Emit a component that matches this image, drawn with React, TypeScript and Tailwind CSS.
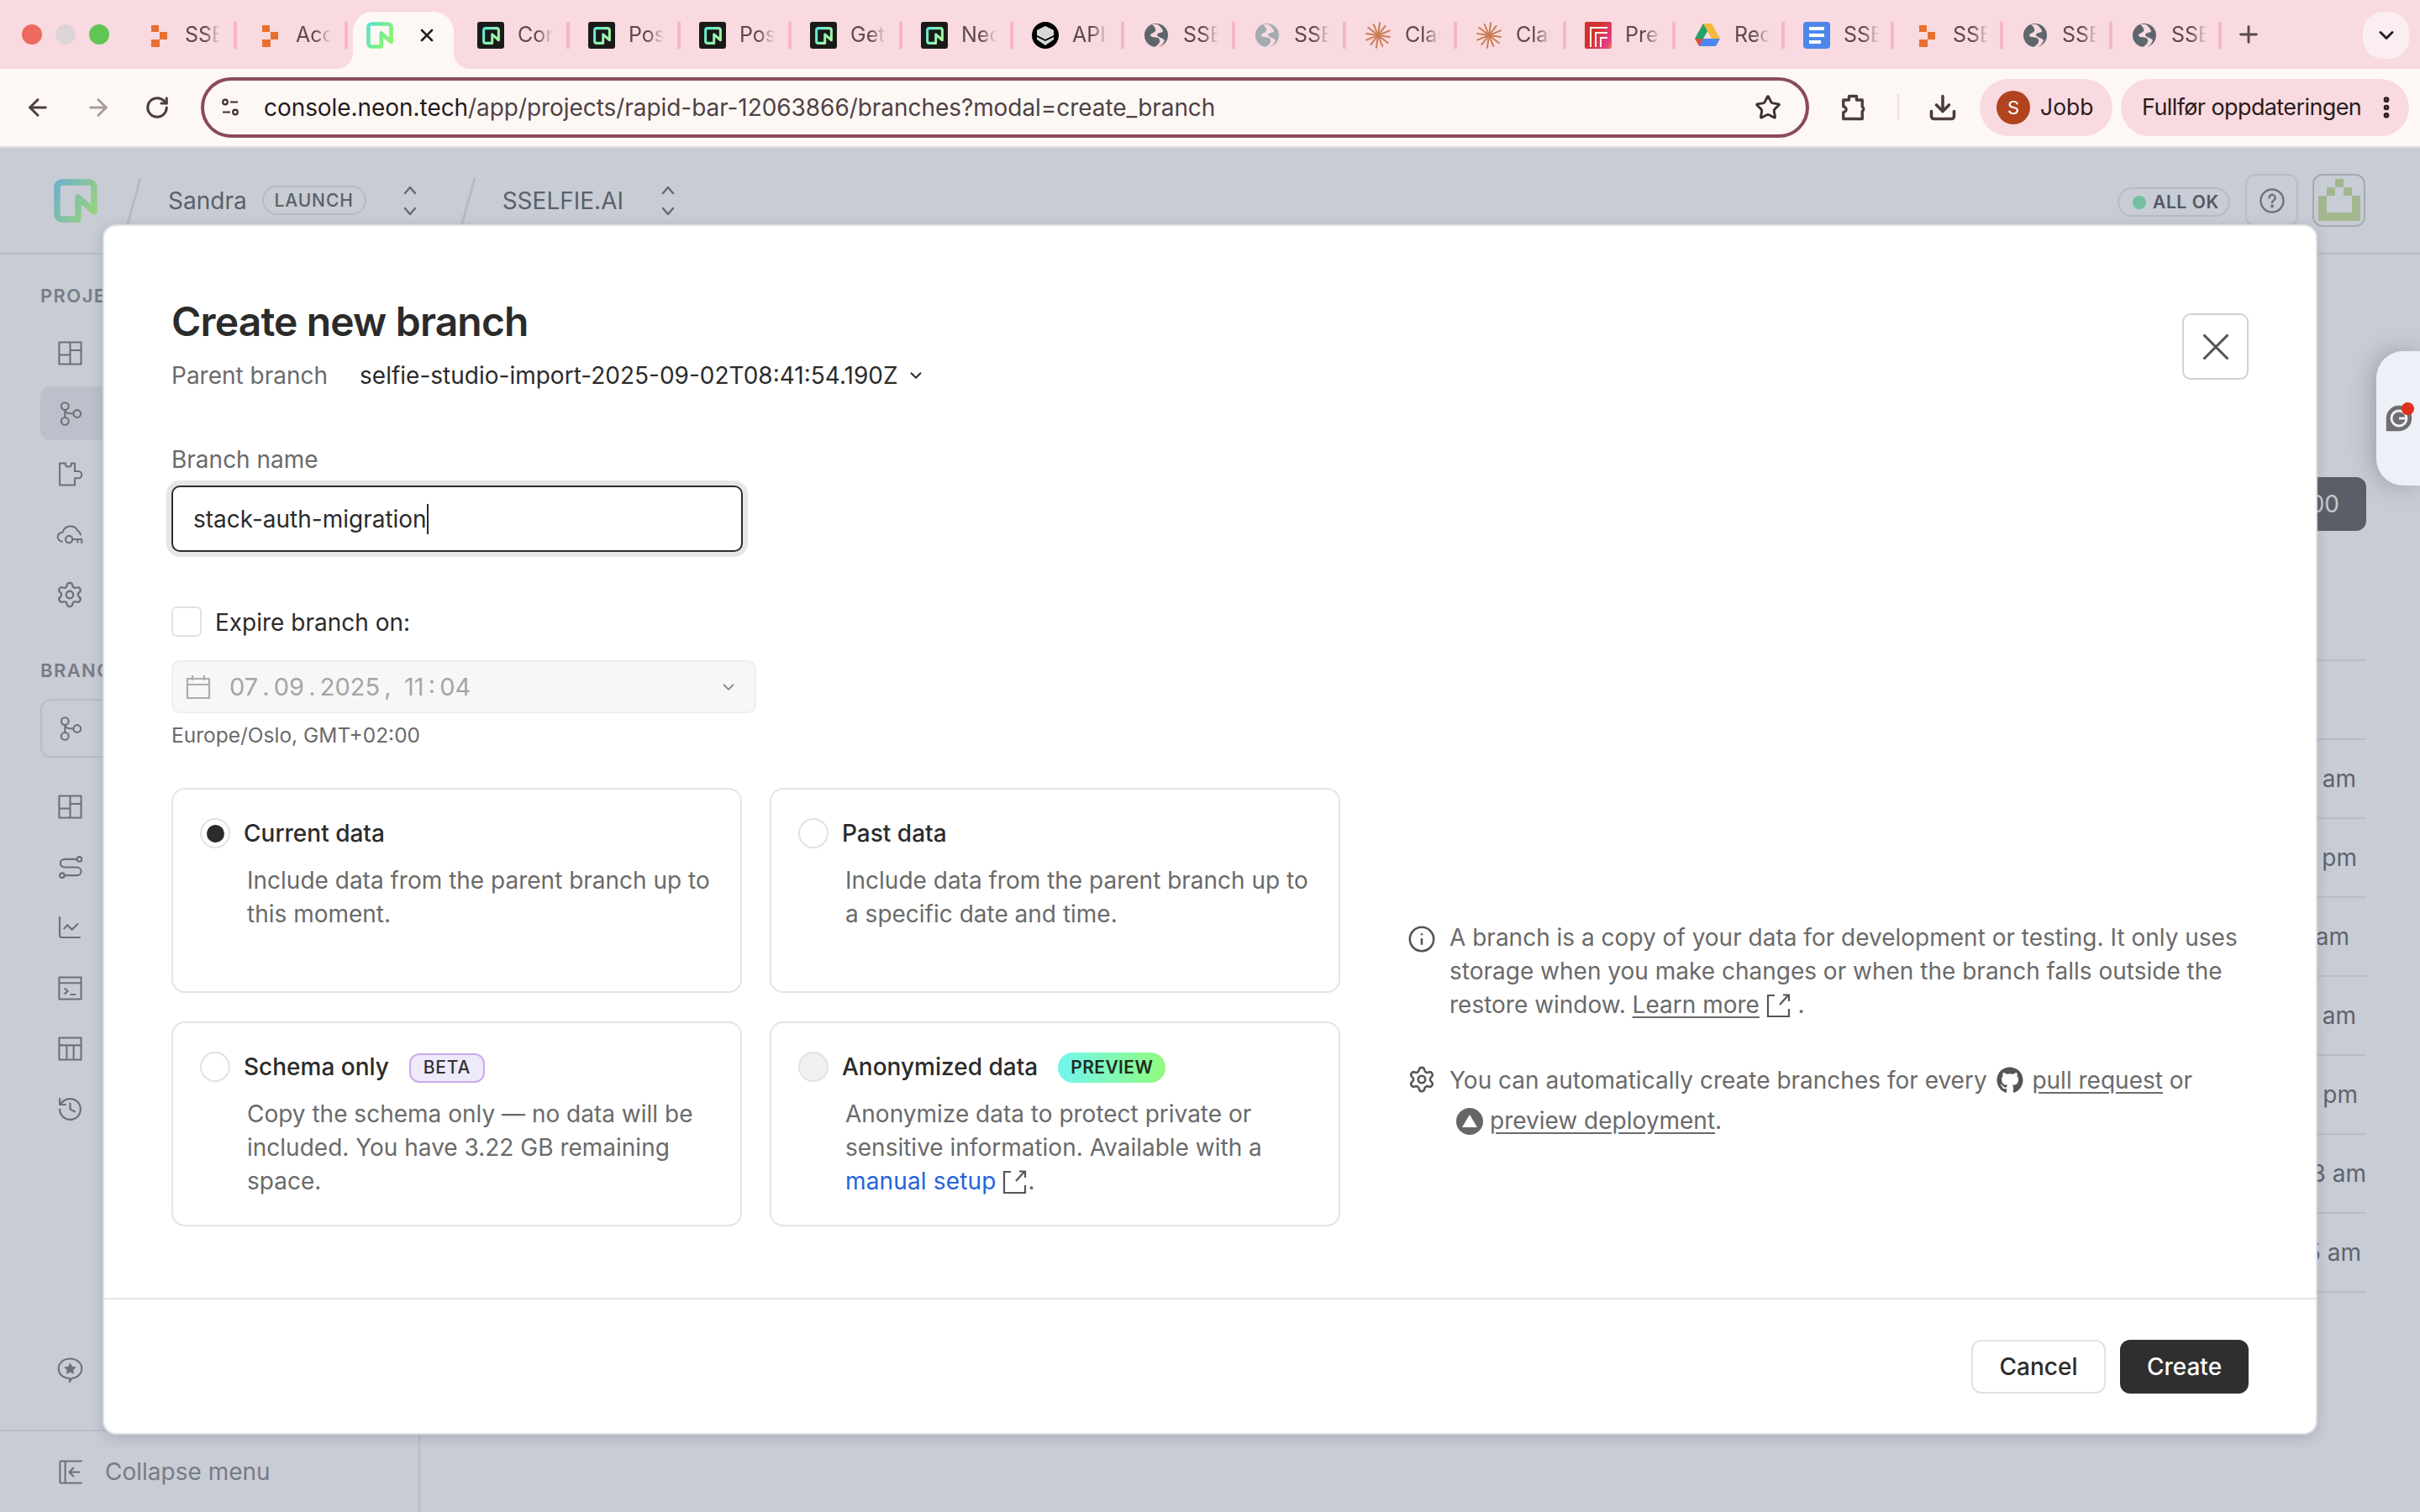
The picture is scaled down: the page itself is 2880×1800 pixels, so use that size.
import React from 'react';
import { ChartLine, History, Settings, Plus, ChevronDown, ArrowLeft, ArrowRight, RotateCw, Star, Download, EllipsisVertical, X, Info } from 'lucide-react';
import { FaGithub } from 'react-icons/fa';

const NeonMark: React.FC<{ id: string; from: string; to: string; className?: string }> = ({ id, from, to, className }) => (
  <svg viewBox="0 0 52 52" className={className} fill="none">
    <defs>
      <linearGradient id={id} x1="0" y1="0" x2="1" y2="0.6">
        <stop offset="0" stopColor={from} />
        <stop offset="1" stopColor={to} />
      </linearGradient>
    </defs>
    <path
      d="M29 48H10a6 6 0 0 1-6-6V10a6 6 0 0 1 6-6h32a6 6 0 0 1 6 6v29L29 22v24"
      stroke={`url(#${id})`}
      strokeWidth="7.5"
      strokeLinejoin="round"
      strokeLinecap="round"
    />
  </svg>
);

const NeonDark: React.FC<{ id: string }> = ({ id }) => (
  <div className="w-8 h-8 rounded-[3px] bg-[#1a1a1a] flex items-center justify-center">
    <NeonMark id={id} from="#5fe8d8" to="#a8f5a0" className="w-[21px] h-[21px]" />
  </div>
);

const OrangeIcon = () => (
  <svg viewBox="0 0 32 32" className="w-8 h-8" fill="#e8702f">
    <path d="M8 4h9v8H8zM18 12h9v9h-9zM8 21h10v9H8z" />
  </svg>
);

const GlobeIcon: React.FC<{ light?: boolean }> = ({ light }) => (
  <svg viewBox="0 0 32 32" className="w-8 h-8">
    <circle cx="16" cy="16" r="14" fill={light ? '#a3abb0' : '#5d666d'} />
    <path
      d="M11 3c3 3 5 5 4 8-1 2-5 2-6 5 1 3 6 2 9 3 3 2 3 5 0 8-2 2-3 3-5 3l6 0c4-2 6-5 7-8-2-3-7-3-9-6 0-3 4-3 7-4 0-3-3-7-7-9z"
      fill="#f9dae0"
    />
  </svg>
);

const ClaudeIcon = () => (
  <svg viewBox="0 0 32 32" className="w-8 h-8" stroke="#cb7d55" strokeWidth="2" strokeLinecap="round">
    {[0, 30, 60, 90, 120, 150, 180, 210, 240, 270, 300, 330].map((a, i) => (
      <line key={a} x1="16" y1="16" x2="16" y2={i % 2 ? 2 : 1} transform={`rotate(${a + 8} 16 16)`} />
    ))}
  </svg>
);

const PrefectIcon = () => (
  <div className="w-8 h-8 rounded-[2px] bg-[linear-gradient(120deg,#d2322c_40%,#e2408a_85%,#e78a30_100%)] overflow-hidden">
    <svg viewBox="0 0 32 32" className="w-8 h-8" fill="none" stroke="#fff" strokeWidth="2">
      <path d="M7 30V7h20M13 30V13h14M19 30V19h8" />
    </svg>
  </div>
);

const DriveIcon = () => (
  <svg viewBox="0 0 32 32" className="w-8 h-8">
    <path d="M11 2h10l-10 18H1z" fill="#21a366" />
    <path d="M11 2h10l10 18H21z" fill="#f6b93b" />
    <path d="M7 20h24l-5 9H6z" fill="#4d86ee" />
    <path d="M1 20h10l-5 9z" fill="#d8503f" />
  </svg>
);

const DocsIcon = () => (
  <div className="w-8 h-8 rounded-[4px] bg-[#4f86ec] flex flex-col justify-center gap-[4px] px-[7px]">
    <div className="h-[4px] bg-white w-full" />
    <div className="h-[4px] bg-white w-full" />
    <div className="h-[4px] bg-white w-[14px]" />
  </div>
);

const ApiIcon = () => (
  <svg viewBox="0 0 32 32" className="w-8 h-8">
    <circle cx="16" cy="16" r="16" fill="#000" />
    <path d="M16 5l10 5v6l-10 5-10-5v-6z" fill="#d7d9d8" />
    <path d="M6 18l10 5 10-5v3l-10 7-10-7z" fill="#d7d9d8" />
  </svg>
);

const tabs: { icon: React.ReactNode; label: string; active?: boolean; narrow?: boolean }[] = [
  { icon: <OrangeIcon />, label: 'SSELFIE' },
  { icon: <OrangeIcon />, label: 'Account' },
  { icon: <NeonMark id="fav-active" from="#5de0d0" to="#85f56f" className="w-8 h-8" />, label: '', active: true },
  { icon: <NeonDark id="fav-1" />, label: 'Console' },
  { icon: <NeonDark id="fav-2" />, label: 'Postgres' },
  { icon: <NeonDark id="fav-3" />, label: 'Postgres' },
  { icon: <NeonDark id="fav-4" />, label: 'Get started' },
  { icon: <NeonDark id="fav-5" />, label: 'Neon' },
  { icon: <ApiIcon />, label: 'API keys' },
  { icon: <GlobeIcon />, label: 'SSELFIE' },
  { icon: <GlobeIcon light />, label: 'SSELFIE' },
  { icon: <ClaudeIcon />, label: 'Claude' },
  { icon: <ClaudeIcon />, label: 'Claude', narrow: true },
  { icon: <PrefectIcon />, label: 'Preview', narrow: true },
  { icon: <DriveIcon />, label: 'Recent', narrow: true },
  { icon: <DocsIcon />, label: 'SSELFIE', narrow: true },
  { icon: <OrangeIcon />, label: 'SSELFIE', narrow: true },
  { icon: <GlobeIcon />, label: 'SSELFIE', narrow: true },
  { icon: <GlobeIcon />, label: 'SSELFIE', narrow: true },
];

const TabStrip = () => (
  <div className="h-[82px] bg-[#f9dae0] flex items-start shrink-0">
    <div className="w-[150px] h-full flex items-center pl-[26px] gap-[16px] shrink-0">
      <div className="w-6 h-6 rounded-full bg-[#ed6a5e]" />
      <div className="w-6 h-6 rounded-full bg-[#ddd4d7]" />
      <div className="w-6 h-6 rounded-full bg-[#61c554]" />
    </div>
    {tabs.map((t, i) =>
      t.active ? (
        <div key={i} className="w-[132px] h-full pt-[14px] px-[6px] shrink-0">
          <div className="relative h-full bg-[#fef8f5] rounded-t-[24px] flex items-start pt-[12px] pl-[16px]">
            <div className="absolute bottom-0 -left-5 w-5 h-5 bg-[radial-gradient(circle_at_0_0,transparent_20px,#fef8f5_20.5px)]" />
            <div className="absolute bottom-0 -right-5 w-5 h-5 bg-[radial-gradient(circle_at_100%_0,transparent_20px,#fef8f5_20.5px)]" />
            {t.icon}
            <X size={24} strokeWidth={2.6} className="ml-[28px] mt-[4px] text-[#1f1f1f]" />
          </div>
        </div>
      ) : (
        <div key={i} className={`${t.narrow ? 'w-[130px]' : 'w-[132px]'} h-full pt-[26px] shrink-0`}>
          <div className="h-8 flex items-center pl-[22px] border-r-[4px] border-[#f5b6c2]">
            {t.icon}
            <span className="ml-[16px] w-[42px] overflow-hidden whitespace-nowrap text-[25px] text-[#5b494e] [mask-image:linear-gradient(to_right,black_55%,transparent)]">
              {t.label}
            </span>
          </div>
        </div>
      ),
    )}
    <Plus size={32} strokeWidth={2.2} className="ml-[16px] mt-[25px] text-[#5b494e] shrink-0" />
    <div className="ml-auto mr-[13px] mt-[14px] w-[55px] h-[56px] rounded-[24px] bg-[#fbeef0] flex items-center justify-center">
      <ChevronDown size={28} strokeWidth={2.6} className="text-[#2b2024]" />
    </div>
  </div>
);

const SiteIcon = () => (
  <svg viewBox="0 0 24 24" className="w-6 h-6" fill="none" stroke="#3e2f33" strokeWidth="2.2">
    <circle cx="6" cy="5.5" r="2.8" />
    <path d="M12 5.5h9M3 17.5h9" />
    <circle cx="18" cy="17.5" r="2.8" />
  </svg>
);

const ExtensionIcon = () => (
  <svg viewBox="0 0 32 32" className="w-9 h-9" fill="none" stroke="#4c3c41" strokeWidth="3" strokeLinejoin="round">
    <path d="M6 8h6V4h8v4h6v7a3 3 0 0 1 0 5v8H6v-7a3 3 0 0 0 0-6z" />
  </svg>
);

const Toolbar = () => (
  <div className="h-[94px] bg-[#fef8f5] border-b-2 border-[#e9d9da] flex items-center shrink-0 pl-[29px] pr-[13px]">
    <ArrowLeft size={32} strokeWidth={2.2} className="text-[#4c3c41] shrink-0" />
    <ArrowRight size={32} strokeWidth={2.2} className="ml-[40px] text-[#a89ea0] shrink-0" />
    <RotateCw size={30} strokeWidth={2.4} className="ml-[39px] text-[#4c3c41] shrink-0" />
    <div className="ml-[37px] w-[1914px] h-[72px] rounded-full border-[4px] border-[#8a4b5a] flex items-center pl-[19px] pr-[29px] shrink-0">
      <SiteIcon />
      <span className="ml-[28px] text-[28px] text-[#241a1d] tracking-[-0.06px] whitespace-nowrap">
        console.neon.tech<span className="text-[#4e4246]">/app/projects/rapid-bar-12063866/branches?modal=create_branch</span>
      </span>
      <Star size={32} strokeWidth={2.2} className="ml-auto text-[#3e2f33]" />
    </div>
    <div className="ml-[34px] shrink-0">
      <ExtensionIcon />
    </div>
    <div className="ml-[35px] w-[2px] h-[32px] bg-[#f1dedf] shrink-0" />
    <Download size={36} strokeWidth={2.4} className="ml-[34px] text-[#4c3c41] shrink-0" />
    <div className="ml-[26px] w-[158px] h-[68px] rounded-full bg-[#f9dae0] flex items-center pl-[20px] shrink-0">
      <div className="w-10 h-10 rounded-full bg-[#b1441f] flex items-center justify-center text-[22px] text-white">S</div>
      <span className="ml-[12px] text-[26.5px] text-[#2a1c20]">Jobb</span>
    </div>
    <div className="ml-[10px] w-[343px] h-[68px] rounded-full bg-[#f9dae0] flex items-center pl-[25px] shrink-0">
      <span className="text-[27px] text-[#2a1c20] whitespace-nowrap tracking-[-0.6px]">Fullfør oppdateringen</span>
      <EllipsisVertical size={32} strokeWidth={3} className="ml-auto mr-[11px] text-[#2a1c20]" />
    </div>
  </div>
);

const UpDown = ({ className = '' }: { className?: string }) => (
  <svg viewBox="0 0 20 38" className={`w-5 h-[38px] ${className}`} fill="none" stroke="#656a73" strokeWidth="2.4" strokeLinecap="round" strokeLinejoin="round">
    <path d="M4 10l6-7 6 7M4 28l6 7 6-7" />
  </svg>
);

const Slash = ({ className = '' }: { className?: string }) => (
  <svg viewBox="0 0 20 58" className={`w-5 h-[58px] self-start mt-[36px] ${className}`} fill="none" stroke="#b6bac5" strokeWidth="3">
    <path d="M19 0L3 58" />
  </svg>
);

const PixelAvatar = () => (
  <svg viewBox="0 0 50 50" className="w-[50px] h-[50px]" fill="#a3b78f">
    <path d="M20 0h10v10h10v10h10v30H0V20h10V10h10zM20 10v10H10v20h30V20H30V10z" fillRule="evenodd" />
  </svg>
);

const PageHeader = () => (
  <div className="h-[127px] border-b-2 border-[#b9bdc8] flex items-center shrink-0 pl-[64px] pr-[65px]">
    <NeonMark id="page-logo" from="#6fb1cb" to="#92d084" className="w-[52px] h-[52px]" />
    <Slash className="ml-[32px]" />
    <span className="ml-[32px] text-[28px] text-[#5b6069]">Sandra</span>
    <span className="ml-[18px] w-[124px] h-[35px] rounded-full border-2 border-[#b6bac5] flex items-center justify-center text-[21px] font-medium tracking-[0.9px] text-[#5b6069]">
      LAUNCH
    </span>
    <UpDown className="ml-[42px]" />
    <Slash className="ml-[48px]" />
    <span className="ml-[32px] text-[28px] text-[#5b6069]">SSELFIE.AI</span>
    <UpDown className="ml-[43px]" />
    <div className="ml-auto flex items-start self-start pt-[31px]">
      <div className="mt-[16px] w-[134px] h-[35px] rounded-full border-2 border-[#b6bac5] flex items-center pl-[16px] gap-[8px]">
        <span className="w-4 h-4 rounded-full bg-[#72bfa2]" />
        <span className="text-[21px] font-semibold tracking-[0.6px] text-[#545963]">ALL OK</span>
      </div>
      <div className="ml-[18px] w-[63px] h-[63px] rounded-[12px] border-2 border-[#b9bdc8] flex items-center justify-center">
        <svg viewBox="0 0 32 32" className="w-[32px] h-[32px]" fill="none" stroke="#6e737c" strokeWidth="2.4">
          <circle cx="16" cy="16" r="13.5" />
          <path d="M12.5 12.5a3.6 3.6 0 1 1 5.5 3c-1.3.8-2 1.5-2 2.8" strokeLinecap="round" />
          <circle cx="16" cy="22.5" r="0.8" fill="#6e737c" />
        </svg>
      </div>
      <div className="ml-[17px] w-[63px] h-[63px] rounded-[12px] border-2 border-[#a5a9b4] flex items-end justify-center pb-[5px]">
        <PixelAvatar />
      </div>
    </div>
  </div>
);

const stroke = { fill: 'none', stroke: 'currentColor', strokeWidth: 1.5, strokeLinecap: 'round', strokeLinejoin: 'round' } as const;
const navIcon = 'w-[33px] h-[33px]';

const DashIcon = () => (
  <svg viewBox="0 0 24 24" className={navIcon} {...stroke} strokeLinecap="butt">
    <path d="M2.5 2.5h19v19h-19zM12 2.5v19M2.5 13.5H12M12 9.5h9.5" />
  </svg>
);
const BranchIcon = () => (
  <svg viewBox="0 0 24 24" className={navIcon} {...stroke}>
    <circle cx="7.5" cy="5.5" r="3.2" />
    <circle cx="7.5" cy="18.5" r="3.2" />
    <circle cx="18" cy="12" r="3.2" />
    <path d="M7.5 8.7c0 2.5 2 3.3 7.3 3.3M7.5 15.3V8.7" />
  </svg>
);
const PuzzleIcon = () => (
  <svg viewBox="0 0 24 24" className={navIcon} {...stroke}>
    <path d="M3 2.5h5V4c0 2 5 2 5 0V2.5h3v7h3a2.5 2.5 0 0 1 0 6h-3v6H3z" />
  </svg>
);
const CloudKeyIcon = () => (
  <svg viewBox="0 0 24 24" className={navIcon} {...stroke}>
    <path d="M5 18a4 4 0 0 1 .5-8 7 7 0 0 1 13-1.5 5 5 0 0 1 2.5 3.5" />
    <circle cx="11" cy="16" r="3" />
    <path d="M14 16h8v3M18.5 16v2.5" />
  </svg>
);
const RouteIcon = () => (
  <svg viewBox="0 0 24 24" className={navIcon} {...stroke}>
    <circle cx="20" cy="5" r="2" />
    <circle cx="5" cy="19" r="2" />
    <path d="M18 5H7a3.5 3.5 0 0 0 0 7h11a3.5 3.5 0 0 1 0 7H7" />
  </svg>
);
const SqlIcon = () => (
  <svg viewBox="0 0 24 24" className={navIcon} {...stroke} strokeLinecap="butt">
    <path d="M2.5 2.5h19v19h-19zM2.5 7.5h19M7 12l3 2.5L7 17M12 17.5h5" />
  </svg>
);
const TablesIcon = () => (
  <svg viewBox="0 0 24 24" className={navIcon} {...stroke} strokeLinecap="butt">
    <path d="M2.5 2.5h19v19h-19zM2.5 9h19M9 9v12.5M15 9v12.5" />
  </svg>
);
const FeedbackIcon = () => (
  <svg viewBox="0 0 24 24" className={navIcon} {...stroke}>
    <path d="M12 2.5c5.500 0 10 3.500 10 8.500s-4.500 8.500-8.500 8.500l-2 3v-3C6 19.500 2 16 2 11s4.500-8.500 10-8.500z" />
    <path d="M12 6l1.700 3.300 3.600.5-2.600 2.500.6 3.600-3.300-1.700-3.300 1.700.6-3.600-2.600-2.500 3.600-.5z" fill="currentColor" stroke="none" />
  </svg>
);
const CollapseIcon = () => (
  <svg viewBox="0 0 24 24" className={navIcon} {...stroke} strokeLinecap="butt">
    <path d="M2.5 2.5h19M2.5 21.5h19M2.5 2.5v19M7 2.5v19M20 12h-9M14.5 8l-4 4 4 4" />
  </svg>
);

const SideIcon: React.FC<{ children: React.ReactNode; active?: boolean }> = ({ children, active }) => (
  <div className={`h-[64px] flex items-center pl-[19px] rounded-l-[12px] ${active ? 'bg-[#bcc0cb]' : ''}`}>{children}</div>
);

const Sidebar = () => (
  <div className="w-[500px] border-r-2 border-[#b9bdc8] flex flex-col text-[#6b7079] shrink-0">
    <div className="flex-1 pl-[48px] pt-[36px]">
      <div className="text-[22px] font-semibold tracking-[1.4px] text-[#777c85] leading-[26px]">PROJECT</div>
      <div className="mt-[23px] flex flex-col gap-[8px]">
        <SideIcon><DashIcon /></SideIcon>
        <SideIcon active><BranchIcon /></SideIcon>
        <SideIcon><PuzzleIcon /></SideIcon>
        <SideIcon><CloudKeyIcon /></SideIcon>
        <SideIcon><Settings size={34} strokeWidth={1.6} className="-ml-[1px]" /></SideIcon>
      </div>
      <div className="mt-[45px] text-[22px] font-semibold tracking-[1.4px] text-[#777c85] leading-[26px]">BRANCH</div>
      <div className="mt-[21px] h-[70px] border-2 border-[#b9bdc8] rounded-[12px] flex items-center pl-[17px]"><BranchIcon /></div>
      <div className="mt-[26px] flex flex-col gap-[8px]">
        <SideIcon><DashIcon /></SideIcon>
        <SideIcon><RouteIcon /></SideIcon>
        <SideIcon><ChartLine size={32} strokeWidth={1.6} /></SideIcon>
        <SideIcon><SqlIcon /></SideIcon>
        <SideIcon><TablesIcon /></SideIcon>
        <SideIcon><History size={33} strokeWidth={1.6} /></SideIcon>
      </div>
      <div className="mt-[246px]">
        <SideIcon><FeedbackIcon /></SideIcon>
      </div>
    </div>
    <div className="h-[98px] border-t-2 border-[#b9bdc8] flex items-center pl-[68px] shrink-0">
      <CollapseIcon />
      <span className="ml-[24px] text-[28px] text-[#777c85]">Collapse menu</span>
    </div>
  </div>
);

const timeRows = [
  { text: '', pr: 'pr-[12px]' },
  { text: 'am', pr: 'pr-[12px]' },
  { text: 'pm', pr: 'pr-[11px]' },
  { text: 'am', pr: 'pr-[20px]' },
  { text: 'am', pr: 'pr-[12px]' },
  { text: 'pm', pr: 'pr-[10px]' },
  { text: '3 am', pr: 'pr-0' },
  { text: '5 am', pr: 'pr-[6px]' },
];

const MainArea = () => (
  <div className="flex-1 flex flex-col items-end pr-[64px] pt-[265px]">
    <div className="w-[200px] h-[64px] bg-[#5a5e67] rounded-[12px] flex items-center justify-end pr-[32px] text-[28px] text-[#c4c8d0]">00</div>
    <div className="mt-[153px] w-[400px] border-t-2 border-[#b9bdc8]">
      {timeRows.map((r, i) => (
        <div key={i} className={`h-[94px] border-b-2 border-[#b9bdc8] flex items-center justify-end text-[28px] text-[#5e636c] ${r.pr}`}>
          {r.text}
        </div>
      ))}
    </div>
  </div>
);

const ExternalIcon = ({ className = '' }: { className?: string }) => (
  <svg viewBox="0 0 30 30" className={`inline-block w-[30px] h-[30px] align-[-6px] ${className}`} fill="none" stroke="currentColor" strokeWidth="2.2">
    <path d="M10 3H2v25h25v-9M16 14L26 3M20 2.5h7V10" />
  </svg>
);

const Radio: React.FC<{ checked?: boolean; disabled?: boolean }> = ({ checked, disabled }) => (
  <span className={`w-9 h-9 rounded-full border-2 border-[#e2e2e2] flex items-center justify-center shrink-0 ${disabled ? 'bg-[#f0f0f0]' : 'bg-white'}`}>
    {checked && <span className="w-[21px] h-[21px] rounded-full bg-[#2b2b2b]" />}
  </span>
);

const OptionCard: React.FC<{ title: string; checked?: boolean; disabled?: boolean; badge?: React.ReactNode; children: React.ReactNode }> = ({
  title,
  checked,
  disabled,
  badge,
  children,
}) => (
  <div className="h-[244px] rounded-[16px] border-2 border-[#e4e4e4] pl-[32px] pr-[28px] pt-[34px]">
    <div className="flex items-center h-9">
      <Radio checked={checked} disabled={disabled} />
      <span className="ml-[16px] text-[28px] font-medium text-[#2b2b2b]">{title}</span>
      {badge}
    </div>
    <p className="mt-[18px] ml-[56px] text-[28px] leading-[40px] text-[#6a6a6a]">{children}</p>
  </div>
);

const CreateBranchModal = () => (
  <div className="absolute left-[122px] top-[267px] w-[2636px] h-[1441px] bg-white rounded-[16px] border-2 border-[#dcdee2] shadow-[0_4px_16px_rgba(90,95,110,0.25)] flex flex-col">
    <div className="flex-1 pl-[80px] pr-[80px] pt-[86px]">
      <div className="flex items-start justify-between h-[174px]">
        <div>
          <h2 className="text-[48px] leading-[56px] font-semibold text-[#2b2b2b] tracking-[-0.85px]">Create new branch</h2>
          <div className="mt-[18px] flex items-center text-[28px] leading-[36px]">
            <span className="text-[#6a6a6a]">Parent branch</span>
            <span className="ml-[38px] text-[#2b2b2b]">selfie-studio-import-2025-09-02T08:41:54.190Z</span>
            <ChevronDown size={22} strokeWidth={2.2} className="ml-[10px] text-[#2b2b2b]" />
          </div>
        </div>
        <div className="mt-[18px] w-[79px] h-[79px] rounded-[10px] border-2 border-[#d2d2d2] flex items-center justify-center">
          <X size={54} strokeWidth={1.4} className="text-[#555]" />
        </div>
      </div>

      <div className="w-[680px] text-[28px] leading-[36px] text-[#6a6a6a]">Branch name</div>
      <div className="mt-[13px] w-[680px] h-[79px] rounded-[10px] border-2 border-[#2b2b2b] shadow-[0_0_0_6px_#e6e6e6] flex items-center pl-[24px] text-[28px] text-[#2b2b2b]">
        stack-auth-migration
        <span className="w-[2px] h-[36px] bg-[#2b2b2b]" />
      </div>

      <div className="mt-[65px] flex items-center h-9">
        <span className="w-9 h-9 rounded-[6px] border-2 border-[#e2e2e2]" />
        <span className="ml-[16px] mt-[2px] text-[28px] text-[#2b2b2b]">Expire branch on:</span>
      </div>
      <div className="mt-[28px] w-[696px] h-[63px] rounded-[10px] border-2 border-[#eeeeee] bg-[#f7f7f7] flex items-center pl-[14px] pr-[20px] text-[#a5a5a5]">
        <svg viewBox="0 0 32 32" className="w-8 h-8" fill="none" stroke="#adadad" strokeWidth="2.2">
          <path d="M3 6h26v23H3zM3 13h26M9 2v6M23 2v6" />
        </svg>
        <span className="ml-[21px] text-[29px] whitespace-pre [word-spacing:-3px]">07 . 09 . 2025 ,   11 : 04</span>
        <ChevronDown size={22} strokeWidth={2} className="ml-auto text-[#8c8c8c]" />
      </div>
      <div className="mt-[11px] text-[24.5px] leading-[30px] text-[#6a6a6a]">Europe/Oslo, GMT+02:00</div>

      <div className="mt-[48px] flex gap-[82px]">
        <div className="w-[1391px] grid grid-cols-2 gap-x-[33px] gap-y-[34px] shrink-0">
          <OptionCard title="Current data" checked>
            Include data from the parent branch up to this moment.
          </OptionCard>
          <OptionCard title="Past data">Include data from the parent branch up to a specific date and time.</OptionCard>
          <OptionCard
            title="Schema only"
            badge={
              <span className="ml-[24px] mt-[2px] w-[90px] h-[35px] rounded-[12px] border-2 border-[#c9a9f3] bg-[#efe9fc] flex items-center justify-center text-[21px] font-medium tracking-[0.8px] text-[#333]">
                BETA
              </span>
            }
          >
            Copy the schema only — no data will be included. You have 3.22 GB remaining space.
          </OptionCard>
          <OptionCard
            title="Anonymized data"
            disabled
            badge={
              <span className="ml-[24px] mt-[2px] w-[128px] h-[36px] rounded-full bg-[linear-gradient(90deg,#72f6ee,#90fb7d)] flex items-center justify-center text-[21px] font-semibold tracking-[0.4px] text-[#1f2a22]">
                PREVIEW
              </span>
            }
          >
            Anonymize data to protect private or sensitive information. Available with a{' '}
            <span className="text-[#2563dc] tracking-[0.15px]">manual setup</span> <ExternalIcon className="text-[#555]" />.
          </OptionCard>
        </div>

        <div className="pt-[158px] w-[990px] text-[28px] leading-[40px] text-[#6a6a6a]">
          <div className="flex">
            <Info size={34} strokeWidth={1.8} className="mt-[5px] -mx-[2px] shrink-0 text-[#555]" />
            <p className="ml-[18px]">
              A branch is a copy of your data for development or testing. It only uses storage when you make changes or when the
              branch falls outside the restore window. <span className="underline underline-offset-4">Learn more</span>{' '}
              <ExternalIcon className="text-[#555]" /> .
            </p>
          </div>
          <div className="mt-[46px] flex">
            <Settings size={34} strokeWidth={1.8} className="mt-[6px] -mx-[2px] shrink-0 text-[#555]" />
            <p className="ml-[18px] leading-[48px]">
              You can automatically create branches for every{' '}
              <FaGithub className="inline-block w-[32px] h-[32px] mx-[3px] align-[-6px] text-[#555]" />{' '}
              <span className="underline underline-offset-4">pull request</span> or
              <br />
              <svg viewBox="0 0 32 32" className="inline-block w-[32px] h-[32px] ml-[8px] mr-[8px] align-[-7px]">
                <circle cx="16" cy="16" r="16" fill="#666" />
                <path d="M16 8l9 15H7z" fill="#fff" />
              </svg>
              <span className="underline underline-offset-4">preview deployment</span>.
            </p>
          </div>
        </div>
      </div>
    </div>
    <div className="h-[161px] border-t-2 border-[#e4e4e4] flex items-center justify-end gap-[17px] pr-[80px] shrink-0">
      <button className="w-[160px] h-[64px] rounded-[12px] border-2 border-[#e2e2e2] bg-white text-[28px] font-medium text-[#2b2b2b]">Cancel</button>
      <button className="w-[153px] h-[64px] rounded-[12px] bg-[#2f2f2f] text-[28px] font-medium text-white">Create</button>
    </div>
  </div>
);

const GrammarlyTab = () => (
  <div className="absolute right-0 top-[418px] w-[52px] h-[160px] bg-[#eef0f8] rounded-l-[32px] shadow-[-4px_0_28px_rgba(70,75,90,0.35)] flex items-center pl-[8px]">
    <svg viewBox="0 0 40 40" className="w-[38px] h-[38px]">
      <path d="M20 4a16 16 0 1 1 0 32H4V20A16 16 0 0 1 20 4z" fill="#6e6e6e" />
      <circle cx="20" cy="20" r="9.5" fill="none" stroke="#eef0f8" strokeWidth="3" />
      <path d="M20 20h10" stroke="#eef0f8" strokeWidth="3" />
      <circle cx="31" cy="8" r="8" fill="#e0301e" />
    </svg>
  </div>
);

const App: React.FC = () => {
  return (
    <div className="relative h-screen w-full overflow-hidden flex flex-col bg-[#c8ccd5] font-['Inter',sans-serif]">
      <TabStrip />
      <Toolbar />
      <PageHeader />
      <div className="flex-1 flex min-h-0">
        <Sidebar />
        <MainArea />
      </div>
      <CreateBranchModal />
      <GrammarlyTab />
    </div>
  );
};

export default App;
